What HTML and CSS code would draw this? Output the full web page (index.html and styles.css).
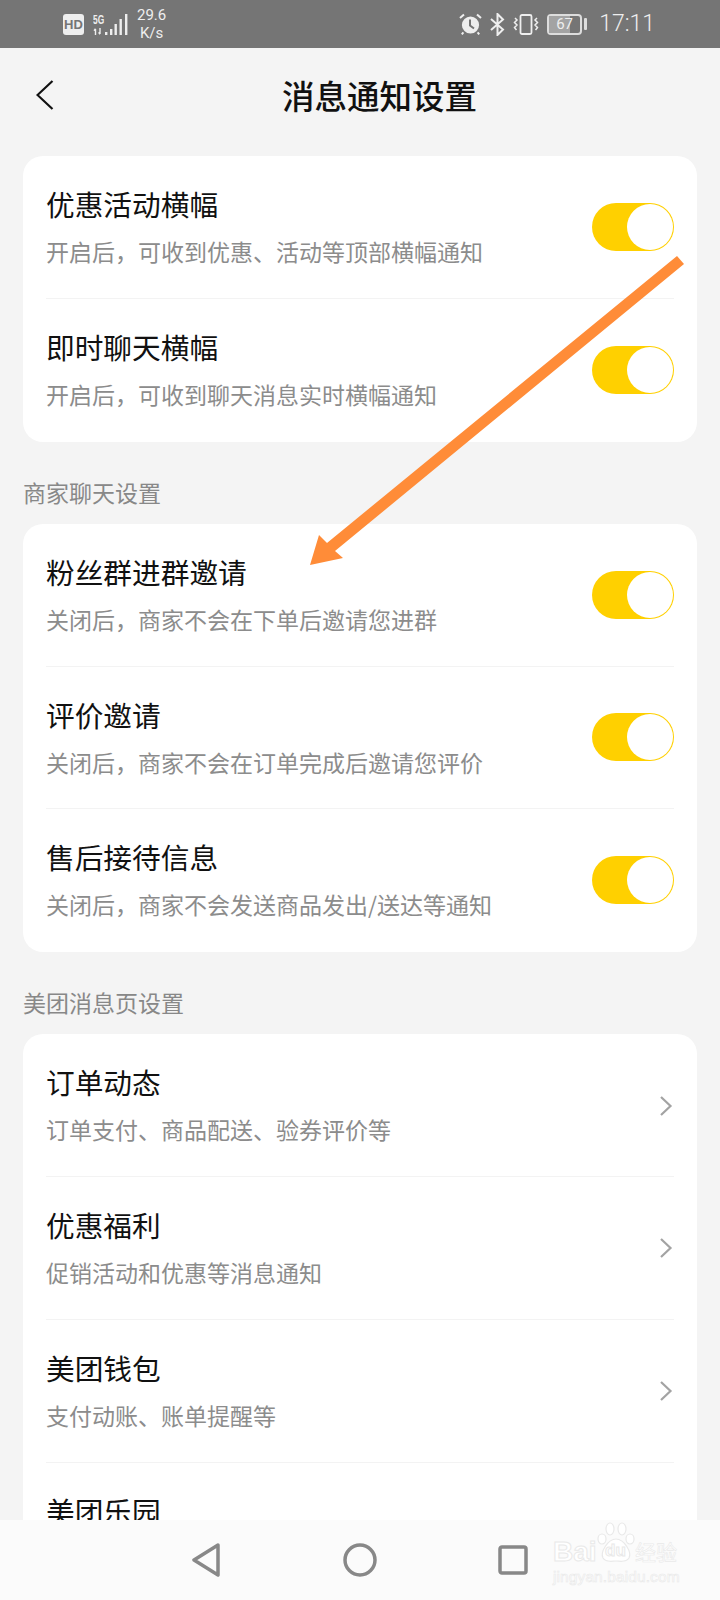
FILE: index.html
```html
<!DOCTYPE html>
<html lang="zh">
<head>
    <meta charset="UTF-8">
    <title>消息通知设置</title>
    <link rel="stylesheet" href="styles.css">
</head>
<body>
<div class="phone">
    <div class="status">
        <div class="status-left">
            <span class="hd">HD</span>
            <div class="signal">
                <span class="fiveg">5G</span>
                <svg width="11" height="7" viewBox="0 0 11 7" class="updown"><path d="M2.500 7V1M1 2.600 2.500 .8M7 0v6M5.600 4.400 7 6.200" fill="none" stroke="#eee" stroke-width="1.400"/></svg>
            </div>
            <svg class="bars" width="23" height="23" viewBox="0 0 23 23"><rect x="0" y="19" width="2.400" height="3" fill="#eee"/><rect x="5" y="16" width="2.400" height="6" fill="#eee"/><rect x="9.500" y="11" width="2.400" height="11" fill="#eee"/><rect x="14.500" y="6" width="2.400" height="16" fill="#eee"/><rect x="20" y="1" width="2.400" height="21" fill="#eee"/></svg>
            <div class="speed"><span>29.6</span><span>K/s</span></div>
        </div>
        <div class="status-right">
            <svg width="23" height="22" viewBox="0 0 23 22"><circle cx="11.500" cy="12" r="8.600" fill="#eee"/><path d="M11 6.500V12.500L15 15.500" fill="none" stroke="#757575" stroke-width="2"/><path d="M1 5 5 1.400M22 5 18 1.400M4.400 19.400 2.800 21.400M18.600 19.400 20.200 21.400" stroke="#eee" stroke-width="2"/></svg>
            <svg class="bt" width="15" height="23" viewBox="0 0 15 23"><path d="M1 6 13 16.500 7.500 22V1L13 6.500 1 17" fill="none" stroke="#eee" stroke-width="2"/></svg>
            <svg class="vib" width="26" height="21" viewBox="0 0 26 21"><rect x="7.500" y="1" width="11" height="19" rx="1.500" fill="none" stroke="#eee" stroke-width="1.800"/><path d="M2 4 4 6 1.500 8.500 4 11 1.500 13.500 3.500 16M24 4 22 6 24.500 8.500 22 11 24.500 13.500 22.500 16" fill="none" stroke="#eee" stroke-width="1.500"/></svg>
            <div class="battery">
                <div class="battery-body"><span class="battery-fill"></span><span class="battery-num">67</span></div>
                <span class="battery-nub"></span>
            </div>
            <span class="time">17:11</span>
        </div>
    </div>

    <div class="main">
        <div class="nav">
            <svg class="back" width="18" height="30" viewBox="0 0 18 30"><path d="M16.500 1 1.500 15 16.500 29" fill="none" stroke="#111" stroke-width="2.200"/></svg>
            <h1 class="title">消息通知设置</h1>
        </div>

        <div class="card">
            <div class="row">
                <div class="row-text"><p class="row-name">优惠活动横幅</p><p class="row-desc">开启后，可收到优惠、活动等顶部横幅通知</p></div>
                <span class="switch"><span class="knob"></span></span>
            </div>
            <div class="row">
                <div class="row-text"><p class="row-name">即时聊天横幅</p><p class="row-desc">开启后，可收到聊天消息实时横幅通知</p></div>
                <span class="switch"><span class="knob"></span></span>
            </div>
        </div>

        <p class="section">商家聊天设置</p>
        <div class="card">
            <div class="row">
                <div class="row-text"><p class="row-name">粉丝群进群邀请</p><p class="row-desc">关闭后，商家不会在下单后邀请您进群</p></div>
                <span class="switch"><span class="knob"></span></span>
            </div>
            <div class="row">
                <div class="row-text"><p class="row-name">评价邀请</p><p class="row-desc">关闭后，商家不会在订单完成后邀请您评价</p></div>
                <span class="switch"><span class="knob"></span></span>
            </div>
            <div class="row">
                <div class="row-text"><p class="row-name">售后接待信息</p><p class="row-desc">关闭后，商家不会发送商品发出/送达等通知</p></div>
                <span class="switch"><span class="knob"></span></span>
            </div>
        </div>

        <p class="section">美团消息页设置</p>
        <div class="card">
            <div class="row">
                <div class="row-text"><p class="row-name">订单动态</p><p class="row-desc">订单支付、商品配送、验券评价等</p></div>
                <svg class="more" width="14" height="22" viewBox="0 0 14 22"><path d="M2 2 11.500 11 2 20" fill="none" stroke="#a3a3a3" stroke-width="2.200"/></svg>
            </div>
            <div class="row">
                <div class="row-text"><p class="row-name">优惠福利</p><p class="row-desc">促销活动和优惠等消息通知</p></div>
                <svg class="more" width="14" height="22" viewBox="0 0 14 22"><path d="M2 2 11.500 11 2 20" fill="none" stroke="#a3a3a3" stroke-width="2.200"/></svg>
            </div>
            <div class="row">
                <div class="row-text"><p class="row-name">美团钱包</p><p class="row-desc">支付动账、账单提醒等</p></div>
                <svg class="more" width="14" height="22" viewBox="0 0 14 22"><path d="M2 2 11.500 11 2 20" fill="none" stroke="#a3a3a3" stroke-width="2.200"/></svg>
            </div>
            <div class="row">
                <div class="row-text"><p class="row-name">美团乐园</p></div>
            </div>
        </div>
    </div>

    <div class="softkeys">
        <svg width="30" height="34" viewBox="0 0 30 34"><path d="M26 2 2 17 26 32Z" fill="none" stroke="#888" stroke-width="3.500" stroke-linejoin="round"/></svg>
        <svg width="34" height="34" viewBox="0 0 34 34"><circle cx="17" cy="17" r="15" fill="none" stroke="#888" stroke-width="3.500"/></svg>
        <svg width="30" height="30" viewBox="0 0 30 30"><rect x="2" y="2" width="26" height="26" rx="2" fill="none" stroke="#888" stroke-width="3.500"/></svg>
    </div>

    <svg class="arrow" width="720" height="1600" viewBox="0 0 720 1600">
        <path d="M677 256 684 264 335 551 343 558 310 565 319 535 327 543Z" fill="#ff8c38"/>
    </svg>

    <div class="mark">
        <div class="mark-top">
            <span class="mark-bai">Bai</span>
            <div class="mark-paw">
                <svg width="38" height="42" viewBox="0 0 38 42"><g fill="#fff" stroke="#e9e9e9" stroke-width="1.200"><ellipse cx="5" cy="17" rx="4" ry="5"/><ellipse cx="13" cy="7" rx="4" ry="6"/><ellipse cx="25" cy="7" rx="4" ry="6"/><ellipse cx="33" cy="17" rx="4" ry="5"/><path d="M19 17C11 17 3 30 6 36 9 41 15 39 19 39 23 39 29 41 32 36 35 30 27 17 19 17Z"/></g></svg>
                <span class="mark-du">du</span>
            </div>
            <span class="mark-cn">经验</span>
        </div>
        <span class="mark-url">jingyan.baidu.com</span>
    </div>
</div>
</body>
</html>
```

FILE: styles.css
```css
* {
    box-sizing: border-box;
}
html, body {
    margin: 0;
    padding: 0;
}
body {
    font-family: "Noto Sans CJK SC", "Noto Sans", sans-serif;
}
p, h1 {
    margin: 0;
    font-weight: normal;
}
.phone {
    position: relative;
    display: flex;
    flex-direction: column;
    width: 720px;
    height: 1600px;
    overflow: hidden;
    background: #f4f4f4;
}

/* status bar */
.status {
    display: flex;
    flex: none;
    justify-content: space-between;
    align-items: center;
    height: 48px;
    padding: 0 65px 0 63px;
    background: #757575;
    color: #eee;
}
.status-left, .status-right {
    display: flex;
    align-items: center;
}
.hd {
    width: 21px;
    height: 21px;
    border-radius: 3px;
    background: #eee;
    color: #757575;
    font: bold 13px/21px "Liberation Sans", sans-serif;
    text-align: center;
}
.signal {
    display: flex;
    flex-direction: column;
    width: 11px;
    margin-left: 9px;
}
.fiveg {
    font: bold 13.500px/11px "Liberation Sans", sans-serif;
    transform: scaleX(.62);
    transform-origin: left;
    white-space: nowrap;
}
.updown {
    margin-top: 3px;
}
.bars {
    margin-left: 1px;
}
.speed {
    display: flex;
    flex-direction: column;
    align-items: center;
    margin-left: 9px;
    font: 15px/18px Roboto, sans-serif;
}
.status-right svg {
    flex: none;
}
.bt {
    margin-left: 8px;
}
.vib {
    margin-left: 8px;
}
.battery {
    display: flex;
    align-items: center;
    margin-left: 8px;
}
.battery-body {
    position: relative;
    width: 35px;
    height: 21px;
    border: 2px solid #ddd;
    border-radius: 4px;
}
.battery-fill {
    display: block;
    width: 66%;
    height: 100%;
    background: #a3a3a3;
}
.battery-num {
    position: absolute;
    top: 0;
    left: 0;
    width: 100%;
    color: #eee;
    font: 15px/17px Roboto, sans-serif;
    text-align: center;
}
.battery-nub {
    width: 3px;
    height: 12px;
    margin-left: 2px;
    border-radius: 1px;
    background: #ddd;
}
.time {
    margin-left: 12px;
    font: 300 23px/28px Roboto, sans-serif;
}

/* page */
.main {
    flex: 1;
    min-height: 0;
    overflow: hidden;
    padding: 0 23px;
}
.nav {
    display: flex;
    align-items: center;
    height: 108px;
    margin-left: -23px;
    padding: 0 0 14px 36px;
}
.title {
    margin-left: 228px;
    color: #111;
    font-size: 32.500px;
    line-height: 44px;
    font-weight: 500;
}
.card {
    border-radius: 20px;
    background: #fff;
}
.section {
    padding: 35px 0 17.300px;
    color: #888;
    font-size: 23px;
    line-height: 30px;
}
.row {
    display: flex;
    justify-content: space-between;
    align-items: center;
    position: relative;
    height: 142.750px;
    padding: 0 23px;
}
.row + .row::before {
    content: "";
    position: absolute;
    top: -1px;
    left: 23px;
    right: 23px;
    height: 1px;
    background: #f3f3f3;
}
.row-text {
    align-self: flex-start;
    padding-top: 28px;
}
.row-name {
    color: #111;
    font-size: 28.700px;
    line-height: 40px;
}
.row-desc {
    margin-top: 13px;
    color: #8c8c8c;
    font-size: 23px;
    line-height: 28px;
}
.switch {
    display: block;
    flex: none;
    width: 82px;
    height: 48px;
    margin-top: -1px;
    padding: 1px;
    border-radius: 24px;
    background: #ffd000;
}
.knob {
    display: block;
    width: 46px;
    height: 46px;
    margin-left: 34px;
    border-radius: 50%;
    background: #fff;
}
.more {
    flex: none;
    margin-right: 1px;
}

/* bottom keys */
.softkeys {
    display: flex;
    flex: none;
    align-items: center;
    gap: 121px;
    height: 80px;
    padding: 0 0 0 192px;
    background: #fbfbfb;
}

/* things on top */
.arrow {
    position: absolute;
    top: 0;
    left: 0;
    pointer-events: none;
}
.mark {
    position: absolute;
    top: 1522px;
    left: 553px;
    display: flex;
    flex-direction: column;
    color: #fff;
    font-family: "Liberation Sans", sans-serif;
    -webkit-text-stroke: 1px #e9e9e9;
}
.mark-top {
    display: flex;
    align-items: flex-end;
    height: 42px;
}
.mark-bai {
    width: 44px;
    font-size: 28px;
    line-height: 24px;
    font-weight: bold;
}
.mark-paw {
    position: relative;
    width: 38px;
    height: 42px;
}
.mark-du {
    position: absolute;
    left: 8px;
    bottom: 4px;
    font-size: 17px;
    line-height: 18px;
    font-weight: bold;
}
.mark-cn {
    font-family: "Noto Sans CJK SC", sans-serif;
    font-size: 21px;
    line-height: 26px;
    -webkit-text-stroke: .6px #e9e9e9;
}
.mark-url {
    margin-top: 5px;
    font-size: 15.500px;
    line-height: 16px;
    letter-spacing: .1px;
    -webkit-text-stroke: .6px #e9e9e9;
}
```
